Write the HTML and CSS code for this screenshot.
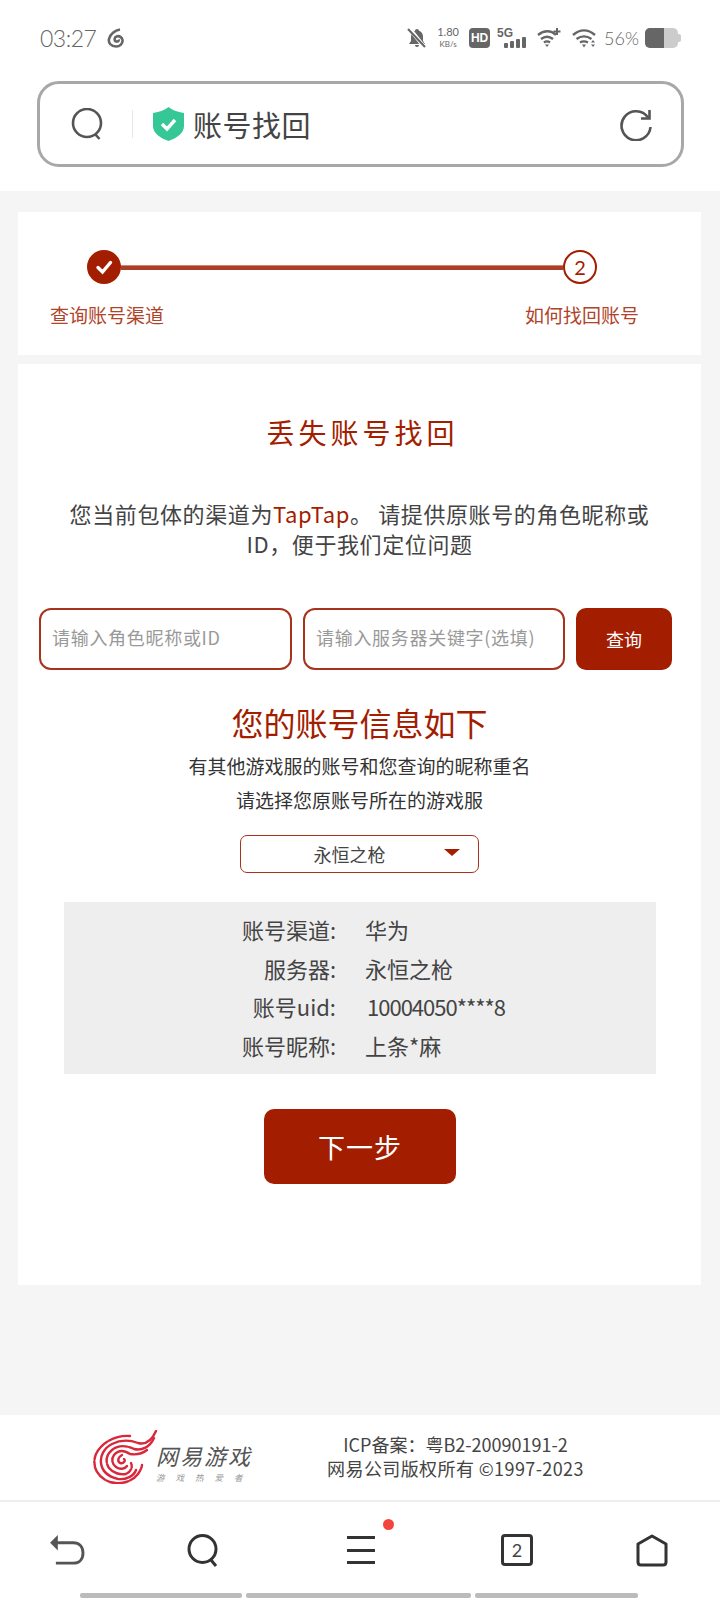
FILE: index.html
```html
<!DOCTYPE html>
<html lang="zh">
<head>
  <title>账号找回</title>
  <meta name="viewport" content="width=device-width, initial-scale=1.0">
  <link rel="stylesheet" href="styles.css">
</head>
<body>
  <header class="top">
    <div class="status">
      <span class="time">03:27</span>
      <svg class="ico-music" viewBox="0 0 18 20" fill="none" stroke="#666" stroke-width="2.600"><path d="M13 1.500C8 2.500 3 6 2 11c-.8 4 2 7.500 7 7.500 4 0 7-3 6.500-6.500C15 9 12 7.500 9.500 8.500 7 9.500 7 13 9.500 13.500c1.500.3 2.500-.8 2-2"/></svg>
      <span class="status-right">
        <svg class="ico-bell" viewBox="0 0 20 20"><path fill="#666" d="M10 1c1 0 2 .8 2 1.800 3 1 4 3.500 4 6.200v4l2 3H2l2-3V9c0-2.700 1-5.200 4-6.200C8 1.800 9 1 10 1zM8 17h4c0 1.200-.9 2-2 2s-2-.8-2-2z"/><path stroke="#fff" stroke-width="4" d="M2 0l16 20"/><path stroke="#666" stroke-width="2" d="M1 1l17 18"/></svg>
        <span class="speed"><b>1.80</b><i>KB/s</i></span>
        <span class="hd">HD</span>
        <span class="net">
          <b>5G</b>
          <span class="bars"><i class="b1"></i><i class="b2"></i><i class="b3"></i><i class="b4"></i></span>
        </span>
        <svg class="ico-wifi" viewBox="0 0 25 20" fill="none" stroke="#666" stroke-width="2.400"><path d="M1 7c6-5 13-5 18 0M4 11c4-3 8-3 12 0M7 14.500c2-1.500 4-1.500 6 0"/><path fill="#666" stroke="none" d="M8 16.500h4L10 19z"/><path stroke-width="2" d="M20 0v7M16.500 3.500h7"/></svg>
        <svg class="ico-wifi" viewBox="0 0 25 20" fill="none" stroke="#666" stroke-width="2.400"><path d="M1 7c7-6 15-6 22 0M4.500 11c5-3.500 10-3.500 15 0M8 14.500c2.500-1.500 5-1.500 8 0"/><path fill="#666" stroke="none" d="M10 16.500h4L12 19.500zM21 12l2 2.500h-4zM21 19l2-2.500h-4z"/></svg>
        <span class="pct">56%</span>
        <span class="battery"><i></i></span>
      </span>
    </div>
    <div class="search-box">
      <svg class="ico-search" viewBox="0 0 32 32" fill="none" stroke="#555" stroke-width="2.600"><circle cx="16" cy="15" r="14"/><path d="M24 26l4.500 5"/></svg>
      <span class="divider"></span>
      <svg class="ico-shield" viewBox="0 0 31 34"><path fill="#35c796" d="M15.500 0C19 3 24 5 31 6v13c0 7-7 12-15.500 15C7 31 0 26 0 19V6c7-1 12-3 15.500-6z"/><path fill="none" stroke="#fff" stroke-width="3.400" d="M9 17l5 5 8-9"/></svg>
      <span class="url">账号找回</span>
      <svg class="ico-reload" viewBox="0 0 32 32" fill="none" stroke="#555" stroke-width="2.600"><path d="M28 8.500A14.500 14.500 0 1 0 30.500 18"/><path d="M29.500 1v8.500H21"/></svg>
    </div>
  </header>

  <main class="content">
    <section class="card steps">
      <div class="track">
        <span class="dot done"><svg viewBox="0 0 20 20" fill="none" stroke="#fff" stroke-width="3.400" stroke-linecap="round"><path d="M4 10.500l4.500 4.500 8-9.500"/></svg></span>
        <span class="line"></span>
        <span class="dot todo">2</span>
      </div>
      <div class="step-labels">
        <span>查询账号渠道</span>
        <span>如何找回账号</span>
      </div>
    </section>

    <section class="card form">
      <h1>丢失账号找回</h1>
      <p class="intro">您当前包体的渠道为<span class="red">TapTap</span>。 请提供原账号的角色昵称或<br>ID，便于我们定位问题</p>
      <div class="query">
        <input class="field f1" type="text" placeholder="请输入角色昵称或ID">
        <input class="field f2" type="text" placeholder="请输入服务器关键字(选填)">
        <button class="query-btn">查询</button>
      </div>
      <h2>您的账号信息如下</h2>
      <p class="sub">有其他游戏服的账号和您查询的昵称重名<br>请选择您原账号所在的游戏服</p>
      <div class="picker">
        <span>永恒之枪</span>
        <i class="caret"></i>
      </div>
      <dl class="info">
        <dt>账号渠道:</dt><dd>华为</dd>
        <dt>服务器:</dt><dd>永恒之枪</dd>
        <dt>账号uid:</dt><dd class="num">10004050****8</dd>
        <dt>账号昵称:</dt><dd>上条*麻</dd>
      </dl>
      <button class="next">下一步</button>
    </section>
  </main>

  <footer class="foot">
    <div class="logo">
      <svg class="emblem" viewBox="0 0 68 54" fill="none" stroke="#d8283c" stroke-width="2.400" stroke-linecap="round">
        <path d="M38 6C24 5 10 12 4 24C-1 36 6 48 18 52C28 55 40 52 46 44C48 41 50 38 50 35" stroke-dasharray="22 2"/>
        <path d="M64 1C60 10 54 15 46 13C38 10 28 10 20 14C12 18 8 26 9 33C10 42 18 47 26 49C34 50 42 46 44 40"/>
        <path d="M62 8C58 17 50 21 42 19C34 15 26 15 20 20C14 25 13 32 17 38C21 43 28 45 34 44C39 42 41 37 39 33" stroke-dasharray="30 2"/>
        <path d="M55 20C50 24 44 25 38 24C32 20 26 20 22 25C19 29 20 34 24 37C28 40 33 39 35 36"/>
        <path d="M30 25C26 27 25 31 28 33C32 34 34 30 32 29"/>
      </svg>
      <div class="logo-text">
        <b>网易游戏</b>
        <i>游戏热爱者</i>
      </div>
    </div>
    <div class="legal">
      <div>ICP备案：粤B2-20090191-2</div>
      <div class="wide">网易公司版权所有 ©1997-2023</div>
    </div>
  </footer>

  <nav class="nav">
    <svg class="ico-back" viewBox="0 0 36 32" fill="none" stroke="#555" stroke-width="3"><path d="M4 8h20c6 0 10 4 10 10.500S30 29 24 29H6"/><path fill="#555" stroke="none" d="M0 8L8 0v16z"/></svg>
    <svg class="ico-find" viewBox="0 0 32 33" fill="none" stroke="#333" stroke-width="3"><circle cx="15.500" cy="15" r="13.500"/><path d="M24 26l5 6"/></svg>
    <span class="menu"><i></i><i></i><i></i><em class="badge"></em></span>
    <span class="tabs">2</span>
    <svg class="ico-home" viewBox="0 0 32 33" fill="none" stroke="#333" stroke-width="3"><path d="M16 2L30 10v18c0 2-1 3-3 3H5c-2 0-3-1-3-3V10z" stroke-linejoin="round"/></svg>
  </nav>
  <div class="gesture"><i class="g1"></i><i class="g2"></i><i class="g3"></i></div>
</body>
</html>
```
FILE: styles.css
```css
* {
  box-sizing: border-box;
}

body {
  margin: 0;
  height: 1600px;
  overflow: hidden;
  display: flex;
  flex-direction: column;
  background: #f5f5f5;
  color: #444;
  font-family: "Noto Sans CJK SC", "Noto Sans", sans-serif;
}

/* top: status bar and search box */
.top {
  height: 191px;
  background: #fff;
  padding: 28px 39px 0 40px;
}
.status {
  display: flex;
  align-items: center;
  height: 20px;
  color: #666;
}
.time {
  font-family: Lato, sans-serif;
  font-weight: 300;
  font-size: 23px;
  line-height: 20px;
  letter-spacing: -0.5px;
}
.ico-music {
  width: 18px;
  height: 20px;
  margin-left: 11px;
}
.status-right {
  margin-left: auto;
  display: flex;
  align-items: center;
  height: 20px;
}
.ico-bell {
  width: 20px;
  height: 20px;
}
.speed {
  width: 22px;
  margin-left: 10px;
  display: flex;
  flex-direction: column;
  align-items: center;
  font-family: Lato, sans-serif;
  line-height: 12px;
}
.speed b {
  font-weight: 400;
  font-size: 11px;
}
.speed i {
  font-style: normal;
  font-size: 8px;
}
.hd {
  width: 21px;
  height: 20px;
  margin-left: 10px;
  background: #666;
  border-radius: 4px;
  color: #fff;
  font: 700 12px/20px "Liberation Sans", sans-serif;
  text-align: center;
}
.net {
  width: 30px;
  height: 20px;
  margin-left: 7px;
  display: flex;
  flex-direction: column;
  position: relative;
}
.net b {
  font: 700 12px/11px "Liberation Sans", sans-serif;
}
.bars {
  position: absolute;
  left: 7px;
  bottom: 0;
  display: flex;
  align-items: flex-end;
  gap: 2px;
}
.bars i {
  width: 4px;
  background: #666;
  border-radius: 1px;
}
.b1 { height: 5px; }
.b2 { height: 7px; }
.b3 { height: 9px; }
.b4 { height: 11px; }
.ico-wifi {
  width: 25px;
  height: 20px;
  margin-left: 10px;
}
.pct {
  margin-left: 7px;
  font-family: Lato, sans-serif;
  font-weight: 300;
  font-size: 18px;
}
.battery {
  position: relative;
  width: 33px;
  height: 20px;
  margin: 0 3px 0 6px;
  background: #ccc;
  border-radius: 5px;
  display: block;
}
.battery::after {
  content: "";
  position: absolute;
  right: -3px;
  top: 6px;
  width: 3px;
  height: 8px;
  background: #ccc;
  border-radius: 0 2px 2px 0;
}
.battery i {
  display: block;
  width: 19px;
  height: 20px;
  background: #666;
  border-radius: 5px 0 0 5px;
}

.search-box {
  width: 647px;
  height: 86px;
  margin: 33px 0 0 -3px;
  padding: 0 29px 0 31px;
  border: 3px solid #a8a8a8;
  border-radius: 22px;
  display: flex;
  align-items: center;
}
.ico-search {
  width: 32px;
  height: 32px;
}
.divider {
  width: 1px;
  height: 28px;
  margin-left: 29px;
  background: #e8e8e8;
}
.ico-shield {
  width: 31px;
  height: 34px;
  margin-left: 20px;
}
.url {
  margin-left: 9px;
  font-size: 29px;
  line-height: 40px;
  letter-spacing: 0.5px;
}
.ico-reload {
  width: 32px;
  height: 32px;
  margin: 2px 0 0 auto;
}

/* cards */
.content {
  flex: 1;
  padding: 21px 19px 0 18px;
}
.card {
  background: #fff;
}
.steps {
  height: 143px;
  padding-top: 38px;
}
.track {
  display: flex;
  align-items: center;
  margin: 0 104px 0 69px;
}
.dot {
  width: 34px;
  height: 34px;
  flex: none;
  border-radius: 50%;
  display: flex;
  align-items: center;
  justify-content: center;
}
.done {
  background: #a31d00;
}
.done svg {
  width: 20px;
  height: 20px;
}
.todo {
  border: 2px solid #a31d00;
  color: #a31d00;
  font: 400 20px/30px Lato, sans-serif;
}
.line {
  flex: 1;
  height: 5px;
  background: #ab4029;
  border-top: 1px solid #cf8574;
}
.step-labels {
  display: flex;
  justify-content: space-between;
  margin: 17px 62px 0 32px;
  font-size: 19px;
  line-height: 28px;
  color: #b0432a;
}

.form {
  height: 921px;
  margin-top: 9px;
  padding-top: 48px;
  text-align: center;
}
h1 {
  margin: 0;
  padding-left: 6px;
  font-weight: 400;
  font-size: 28px;
  line-height: 40px;
  letter-spacing: 4px;
  color: #a31d00;
}
.intro {
  margin: 46px 0 0;
  font-size: 22px;
  line-height: 30px;
  letter-spacing: 0.6px;
}
.red {
  color: #a31d00;
}
.query {
  display: flex;
  margin: 50px 29px 0 21px;
  height: 62px;
}
.field {
  height: 62px;
  padding: 0 0 4px 11px;
  border: 2px solid #a8331c;
  border-radius: 12px;
  background: #fff;
  font-family: "Noto Sans CJK SC", sans-serif;
  font-size: 18px;
  letter-spacing: 0.7px;
  outline: none;
}
.field::placeholder {
  color: #999;
}
.f1 {
  width: 253px;
}
.f2 {
  width: 262px;
  margin-left: 11px;
}
.query-btn {
  width: 96px;
  margin-left: 11px;
  border: 0;
  border-radius: 10px;
  background: #a31d00;
  color: #fff;
  font-family: "Noto Sans CJK SC", sans-serif;
  font-size: 18px;
}
h2 {
  margin: 32px 0 0;
  font-weight: 400;
  font-size: 32px;
  line-height: 40px;
  color: #a31d00;
}
.sub {
  margin: 7px 0 0;
  font-size: 19px;
  line-height: 34px;
  color: #333;
}
.picker {
  position: relative;
  width: 239px;
  height: 38px;
  margin: 18px auto 0 222px;
  padding-right: 20px;
  border: 1px solid #a8331c;
  border-radius: 7px;
  font-size: 18px;
  line-height: 36px;
}
.caret {
  position: absolute;
  right: 18px;
  top: 13px;
  border: 8px solid transparent;
  border-top: 7px solid #a31d00;
  border-bottom: 0;
}
.info {
  display: grid;
  grid-template-columns: 272px 1fr;
  grid-auto-rows: 38.5px;
  column-gap: 29px;
  height: 172px;
  margin: 29px 45px 0 46px;
  padding: 8px 0;
  background: #eee;
  font-size: 22px;
  line-height: 38.5px;
  text-align: left;
}
.info dt {
  text-align: right;
}
.info dd {
  margin: 0;
}
.info .num {
  margin-left: 2px;
  letter-spacing: -1px;
}
.next {
  display: block;
  width: 192px;
  height: 75px;
  margin: 35px auto 0 246px;
  border: 0;
  border-radius: 10px;
  background: #a31d00;
  color: #fff;
  font-family: "Noto Sans CJK SC", sans-serif;
  font-size: 27px;
  letter-spacing: 1px;
}

/* footer */
.foot {
  height: 85px;
  background: #fff;
  display: flex;
  align-items: center;
}
.logo {
  display: flex;
  margin-left: 92px;
  width: 160px;
  position: relative;
}
.emblem {
  width: 68px;
  height: 54px;
  flex: none;
}
.logo-text {
  margin: 10px 0 0 -4px;
  display: flex;
  flex-direction: column;
  white-space: nowrap;
}
.logo-text b {
  font-weight: 400;
  font-size: 22px;
  line-height: 30px;
  letter-spacing: 2px;
  font-style: italic;
  color: #555;
}
.logo-text i {
  font-size: 8.500px;
  line-height: 15px;
  letter-spacing: 11px;
  color: #999;
}
.legal {
  margin-left: 74px;
  width: 259px;
  padding-bottom: 4px;
  text-align: center;
  font-size: 18px;
  line-height: 24px;
  white-space: nowrap;
}
.legal .wide {
  letter-spacing: 0.4px;
}

/* browser nav */
.nav {
  position: relative;
  height: 95px;
  border-top: 2px solid #eee;
  background: #fff;
  display: flex;
  align-items: center;
  padding: 3px 0 0 50px;
}
.ico-back {
  width: 35px;
  height: 31px;
}
.ico-find {
  width: 32px;
  height: 33px;
  margin-left: 102px;
}
.menu {
  position: relative;
  width: 28px;
  height: 28px;
  margin-left: 128px;
  display: flex;
  flex-direction: column;
  justify-content: space-between;
}
.menu i {
  height: 3px;
  background: #333;
}
.badge {
  position: absolute;
  left: 36px;
  top: -17px;
  width: 11px;
  height: 11px;
  border-radius: 50%;
  background: #f4433b;
}
.tabs {
  width: 32px;
  height: 32px;
  margin-left: 126px;
  border: 3px solid #333;
  border-radius: 4px;
  text-align: center;
  font: 400 18px/26px Lato, sans-serif;
}
.ico-home {
  width: 32px;
  height: 33px;
  margin-left: 103px;
}
.gesture {
  height: 7px;
  padding: 0 81px 0 80px;
  margin-top: -2px;
  background: #fff;
  display: flex;
  gap: 4px;
  position: relative;
}
.gesture i {
  height: 5px;
  background: #bbb;
  border-radius: 2px;
}
.g1 { width: 162px; }
.g2 { width: 225px; }
.g3 { width: 163px; }
```
